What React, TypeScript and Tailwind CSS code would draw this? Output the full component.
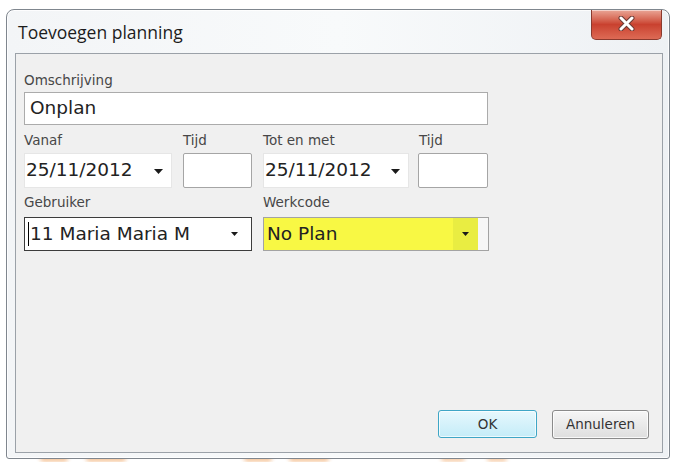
import React from 'react';

// small black drop-down triangle used by the combo boxes
function Arrow({ w = 8, h = 4 }: { w?: number; h?: number }) {
    return (
        <svg width={w} height={h} viewBox={`0 0 ${w} ${h}`} className="shrink-0">
            <path d={`M0 0 H${w} L${w / 2} ${h} Z`} fill="#1a1a1a" />
        </svg>
    );
}

function Label({ children, className = '' }: { children: React.ReactNode; className?: string }) {
    return (
        <div className={`h-[20px] font-['DejaVu_Sans',sans-serif] text-[13.5px] leading-[20px] text-[#474747] ${className}`}>
            {children}
        </div>
    );
}

function DateCombo({ value, className = '' }: { value: string; className?: string }) {
    return (
        <div className={`flex items-center border border-[#e6e6e6] bg-white pl-[1px] pr-[8px] ${className}`}>
            <span className="font-['DejaVu_Sans',sans-serif] text-[18.5px] leading-none text-[#222]">{value}</span>
            <span className="ml-auto pt-[1px]">
                <Arrow w={9} h={5} />
            </span>
        </div>
    );
}

function TimeBox({ className = '' }: { className?: string }) {
    return <div className={`rounded-[2px] border border-[#a5a5a5] bg-white ${className}`} />;
}

export default function App() {
    return (
        <div className="relative h-[462px] w-[673px] overflow-hidden bg-white">
            {/* blurred things behind the dialog, only visible under its bottom edge */}
            <div className="absolute bottom-0 left-0 flex h-[8px] w-full">
                <span className="ml-[40px] w-[28px] rounded-full bg-[#f2b27a] opacity-70 blur-[2px]" />
                <span className="ml-[18px] w-[40px] rounded-full bg-[#f2b27a] opacity-70 blur-[2px]" />
                <span className="ml-[118px] w-[28px] rounded-full bg-[#f2b27a] opacity-70 blur-[2px]" />
                <span className="ml-[17px] w-[40px] rounded-full bg-[#f2b27a] opacity-70 blur-[2px]" />
                <span className="ml-[112px] w-[24px] rounded-full bg-[#f2b27a] opacity-60 blur-[2px]" />
                <span className="ml-[22px] w-[20px] rounded-full bg-[#f2b27a] opacity-60 blur-[2px]" />
            </div>

            <div className="relative ml-[6px] mt-[9px] flex h-[450px] w-[664px] flex-col rounded-t-[8px] rounded-b-[3px] border border-[#7f868e] bg-gradient-to-r from-[#f3f5f7] via-[#f8fafb] to-[#eef1f4] shadow-[inset_0_0_0_1px_rgba(255,255,255,0.8)]">
                {/* title bar */}
                <div className="flex h-[43px] items-start justify-between">
                    <div className="pl-[11px] pt-[10px] font-['Open_Sans',sans-serif] text-[17.5px] leading-[24px] text-[#1c1c1c]">
                        Toevoegen planning
                    </div>
                    <div className="mr-[7px] flex h-[30px] w-[71px] items-start justify-center rounded-b-[5px] border border-t-0 border-[#8a3a2e] bg-gradient-to-b from-[#e9a596] via-[#c9412f] to-[#dd6a55] pt-[6px] shadow-[inset_0_1px_0_rgba(255,255,255,0.5)]">
                        <svg width="17" height="15" viewBox="0 0 17 15">
                            <path d="M3 2 L14 13 M14 2 L3 13" stroke="#6b3a34" strokeWidth="5" strokeLinecap="round" />
                            <path d="M3 2 L14 13 M14 2 L3 13" stroke="#ffffff" strokeWidth="3" strokeLinecap="round" />
                        </svg>
                    </div>
                </div>

                {/* client area */}
                <div className="mb-[5px] ml-[8px] mr-[6px] flex flex-1 flex-col border border-[#9ba1a8] bg-[#f0f0f0] pl-[8px] pt-[16px]">
                    <Label>Omschrijving</Label>
                    <div className="mt-[2px] flex h-[33px] w-[464px] items-center border border-[#ababab] bg-white pl-[5px]">
                        <span className="font-['DejaVu_Sans',sans-serif] text-[18.5px] leading-none text-[#222]">Onplan</span>
                    </div>

                    <div className="mt-[5px] flex">
                        <Label className="w-[159px]">Vanaf</Label>
                        <Label className="w-[80px]">Tijd</Label>
                        <Label className="w-[156px]">Tot en met</Label>
                        <Label>Tijd</Label>
                    </div>
                    <div className="mt-[3px] flex h-[35px]">
                        <DateCombo value="25/11/2012" className="w-[148px]" />
                        <TimeBox className="ml-[11px] w-[69px]" />
                        <DateCombo value="25/11/2012" className="ml-[11px] w-[146px]" />
                        <TimeBox className="ml-[9px] w-[70px]" />
                    </div>

                    <div className="mt-[4px] flex">
                        <Label className="w-[239px]">Gebruiker</Label>
                        <Label>Werkcode</Label>
                    </div>
                    <div className="mt-[5px] flex h-[34px]">
                        <div className="flex w-[228px] items-center border border-[#3c3c3c] bg-white pl-[3px] pr-[13px]">
                            <span className="mr-[1px] h-[24px] w-[1px] bg-black" />
                            <span className="font-['DejaVu_Sans',sans-serif] text-[18.5px] leading-none text-[#222]">11 Maria Maria M</span>
                            <span className="ml-auto">
                                <Arrow w={7} h={4} />
                            </span>
                        </div>
                        <div className="ml-[11px] flex w-[226px] border border-[#a3a3a3] bg-[#f7f7f7]">
                            <div className="flex flex-1 items-center bg-[#f8f844] pl-[3px]">
                                <span className="font-['DejaVu_Sans',sans-serif] text-[18.5px] leading-none text-[#222]">No Plan</span>
                            </div>
                            <div className="flex w-[25px] items-center justify-center bg-[#e9ed42]">
                                <Arrow w={7} h={4} />
                            </div>
                            <div className="w-[10px]" />
                        </div>
                    </div>

                    <div className="flex-1" />

                    <div className="flex justify-end gap-[15px] pb-[13px] pr-[13px]">
                        <button className="flex h-[28px] w-[99px] items-center justify-center rounded-[3px] border border-[#3ea6c6] bg-gradient-to-b from-[#e6f8fd] to-[#c4ecf8] font-['DejaVu_Sans',sans-serif] text-[13.5px] text-[#333] shadow-[inset_0_0_0_1px_rgba(255,255,255,0.7)]">
                            OK
                        </button>
                        <button className="flex h-[29px] w-[97px] items-center justify-center rounded-[3px] border border-[#8a8a8a] bg-gradient-to-b from-[#f6f6f6] to-[#dedede] font-['DejaVu_Sans',sans-serif] text-[13.5px] text-[#333] shadow-[inset_0_0_0_1px_rgba(255,255,255,0.8)]">
                            Annuleren
                        </button>
                    </div>
                </div>
            </div>
        </div>
    );
}
